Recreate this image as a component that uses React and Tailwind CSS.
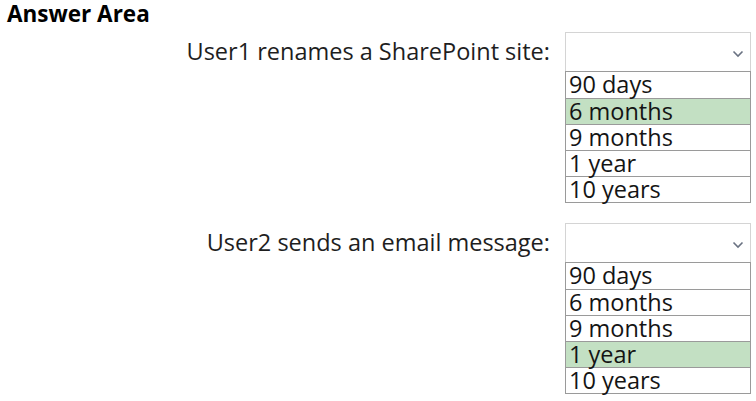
import React from 'react';

const OPTIONS = ['90 days', '6 months', '9 months', '1 year', '10 years'];

const Chevron = () => (
  <svg width="12" height="8" viewBox="0 0 12 8" className="text-gray-500">
    <path d="M1.5 1.5 L6 6 L10.5 1.5" fill="none" stroke="currentColor" strokeWidth="1.6" />
  </svg>
);

const DropRow = ({ label, selected, className }) => (
  <div className={`flex items-start ${className}`}>
    <div className="flex-1 h-[39px] flex items-center justify-end pr-[15px] text-[23.5px] text-[#1e1e1e] whitespace-nowrap">
      {label}
    </div>
    <div className="w-[186px] flex flex-col">
      <div className="h-[39px] border border-[#d4d4d4] border-b-0 flex items-center justify-end pr-[6px] pt-[4px]">
        <Chevron />
      </div>
      <div className="border border-[#9a9a9a]">
        {OPTIONS.map((o, i) => (
          <div
            key={o}
            className={`h-[26px] pl-[3px] text-[23.5px] leading-[25px] text-[#141414] ${i > 0 ? 'border-t border-[#9a9a9a]' : ''} ${o === selected ? 'bg-[#c3e0c3]' : 'bg-white'}`}
          >
            {o}
          </div>
        ))}
      </div>
    </div>
  </div>
);

export default function App() {
  return (
    <div className="w-[756px] h-[401px] bg-white overflow-hidden pl-[7px] pr-[5px] pt-[1px]" style={{ fontFamily: '"Open Sans", "Noto Sans", sans-serif' }}>
      <div className="text-[22.5px] font-bold leading-[25px] text-black">Answer Area</div>
      <DropRow label="User1 renames a SharePoint site:" selected="6 months" className="mt-[6px]" />
      <DropRow label="User2 sends an email message:" selected="1 year" className="mt-[20px]" />
    </div>
  );
}
